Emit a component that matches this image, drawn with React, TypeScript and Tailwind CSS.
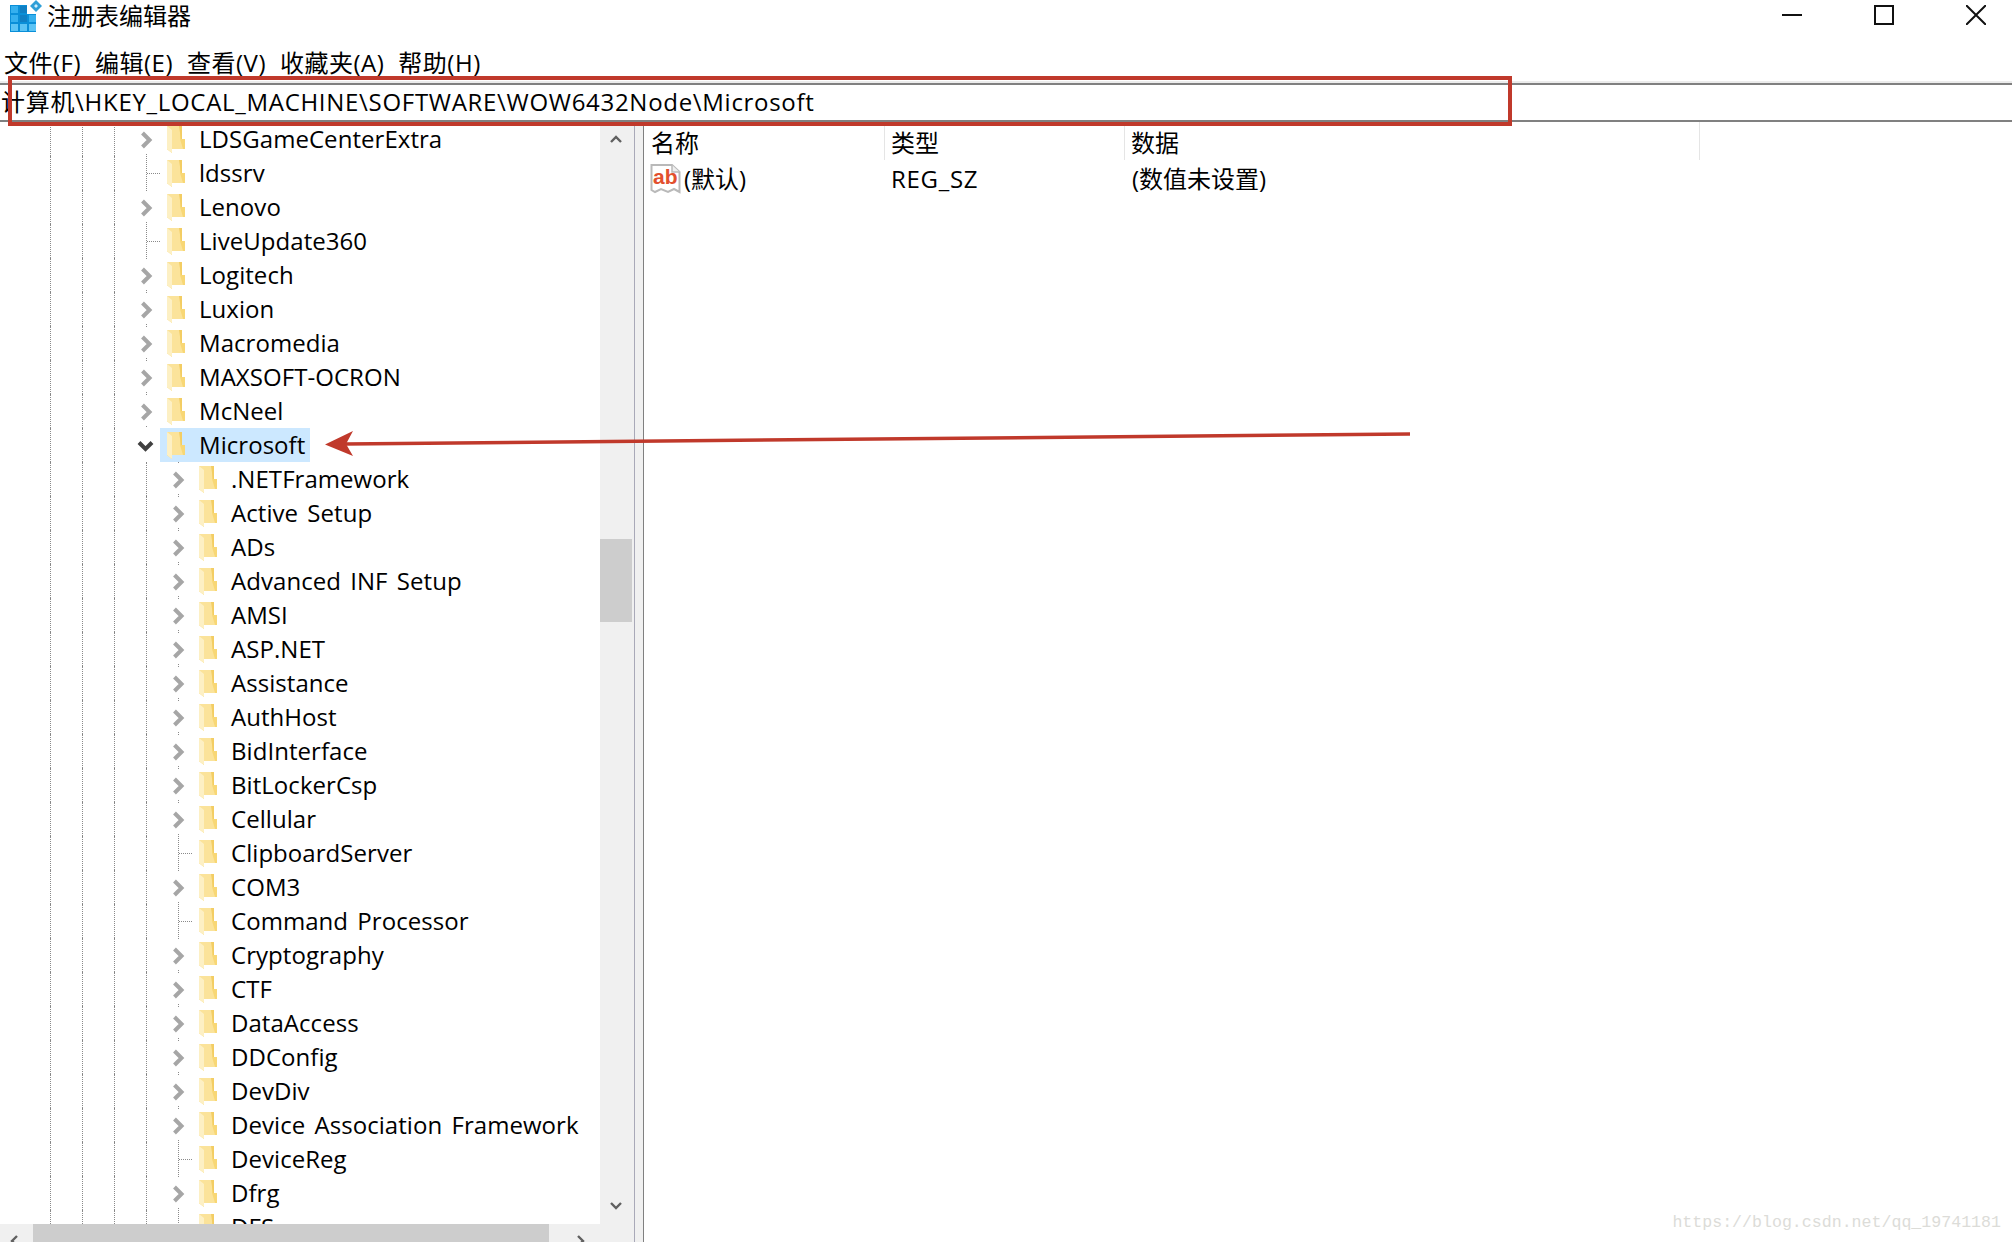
const fontFamily = '"Open Sans", "Noto Sans CJK SC", sans-serif'

type Kind = 'branch' | 'leaf' | 'open'
type Node = { name: string; kind?: Kind }

const topLevel: Node[] = [
  { name: 'LDSGameCenterExtra' },
  { name: 'ldssrv', kind: 'leaf' },
  { name: 'Lenovo' },
  { name: 'LiveUpdate360', kind: 'leaf' },
  { name: 'Logitech' },
  { name: 'Luxion' },
  { name: 'Macromedia' },
  { name: 'MAXSOFT-OCRON' },
  { name: 'McNeel' },
  { name: 'Microsoft', kind: 'open' },
]

const children: Node[] = [
  { name: '.NETFramework' },
  { name: 'Active Setup' },
  { name: 'ADs' },
  { name: 'Advanced INF Setup' },
  { name: 'AMSI' },
  { name: 'ASP.NET' },
  { name: 'Assistance' },
  { name: 'AuthHost' },
  { name: 'BidInterface' },
  { name: 'BitLockerCsp' },
  { name: 'Cellular' },
  { name: 'ClipboardServer', kind: 'leaf' },
  { name: 'COM3' },
  { name: 'Command Processor', kind: 'leaf' },
  { name: 'Cryptography' },
  { name: 'CTF' },
  { name: 'DataAccess' },
  { name: 'DDConfig' },
  { name: 'DevDiv' },
  { name: 'Device Association Framework' },
  { name: 'DeviceReg', kind: 'leaf' },
  { name: 'Dfrg' },
  { name: 'DFS', kind: 'leaf' },
]

function FolderIcon() {
  return (
    <svg width="18" height="27" viewBox="0 0 18 27" className="shrink-0">
      <path d="M0 0H15V13H18V23H5V27L0 23Z" fill="#f8d775" />
      <path d="M0 0H13V13L16 23H5V27L0 23Z" fill="#fbe39a" />
      <path d="M0 0L5 4V27L0 23Z" fill="#fdf0c4" />
      <path d="M5 23H18V13H14L12 0H15V13H18V23Z" fill="#f3cd63" />
    </svg>
  )
}

function Guide() {
  return (
    <div className="flex h-full w-[32px] shrink-0 justify-center">
      <div className="h-full w-0 border-l border-dotted border-[#8a8a8a]" />
    </div>
  )
}

function Connector({ kind }: { kind: Kind }) {
  return (
    <svg width="32" height="34" viewBox="0 0 32 34" className="shrink-0">
      {kind === 'leaf' && (
        <g stroke="#8a8a8a" strokeDasharray="1 1" fill="none">
          <path d="M16.5 0V34" />
          <path d="M17 17.5H30" />
        </g>
      )}
      {kind === 'branch' && (
        <>
          <path d="M16.5 0V2M16.5 32V34" stroke="#8a8a8a" strokeDasharray="1 1" />
          <path d="M12.5 11L19.5 18L12.5 25" fill="none" stroke="#a6a6a6" strokeWidth="4" />
        </>
      )}
      {kind === 'open' && (
        <path d="M9 14.5L15.5 21L22 14.5" fill="none" stroke="#404040" strokeWidth="4" />
      )}
    </svg>
  )
}

function TreeRow({ node, level }: { node: Node; level: number }) {
  const kind = node.kind ?? 'branch'
  const selected = kind === 'open'
  return (
    <div className="flex h-[34px] items-center pl-[34px] tracking-[0.05px] [word-spacing:3px]">
      <Guide />
      <Guide />
      <Guide />
      {level === 2 && <Guide />}
      <Connector kind={kind} />
      {selected ? (
        <div className="-ml-[2px] flex h-[34px] items-center bg-[#cce8ff] pr-[5px] pl-[7px]">
          <FolderIcon />
          <span className="ml-[14px]">{node.name}</span>
        </div>
      ) : (
        <>
          <div className="ml-[5px]">
            <FolderIcon />
          </div>
          <span className="ml-[14px] whitespace-nowrap">{node.name}</span>
        </>
      )}
    </div>
  )
}

function AbIcon() {
  return (
    <svg width="31" height="32" viewBox="0 0 31 32" className="shrink-0">
      <path
        d="M1.5 2H22L29.5 9V29L24 26L18 29L11 26L5 29L1.5 27Z"
        fill="#fff"
        stroke="#b9b9b9"
        strokeWidth="2"
      />
      <path d="M22 2V9H29.5" fill="#efefef" stroke="#b9b9b9" strokeWidth="1.5" />
      <text x="3" y="21" fontSize="21" fontWeight="700" fill="#e2502e" fontFamily="Liberation Sans, sans-serif">
        ab
      </text>
    </svg>
  )
}

function RegeditIcon() {
  const cells = [
    [0, 0], [9, 0], [0, 9], [9, 9], [18, 9], [0, 18], [9, 18], [18, 18],
  ]
  return (
    <svg width="32" height="32" viewBox="0 0 32 32" className="shrink-0">
      <rect x="0" y="5" width="17" height="27" fill="#0a8fd8" />
      <rect x="17" y="14" width="9" height="18" fill="#0a8fd8" />
      {cells.map(([x, y], i) => (
        <rect
          key={i}
          x={x + 1}
          y={y + 6}
          width="7"
          height="7"
          fill={y === 18 ? '#5cc4f5' : i % 2 ? '#0f7fc4' : '#35b0ee'}
        />
      ))}
      <path d="M26 0L32 6L26 12L20 6Z" fill="#2f9fd8" />
      <path d="M26 4L28 6L26 8L24 6Z" fill="#cfeefc" />
    </svg>
  )
}

export default function App() {
  return (
    <div
      className="relative flex h-[1242px] w-[2012px] flex-col overflow-hidden bg-white text-[24px] text-black"
      style={{ fontFamily }}
    >
      <div className="flex h-[34px] shrink-0 items-start pr-[26px] pl-[10px]">
        <RegeditIcon />
        <span className="ml-[5px] leading-[32px]">注册表编辑器</span>
        <div className="ml-auto flex gap-[72px] pt-[5px]">
          <svg width="20" height="20" viewBox="0 0 20 20">
            <path d="M0 10H20" stroke="#111" strokeWidth="2" />
          </svg>
          <svg width="20" height="20" viewBox="0 0 20 20">
            <rect x="1" y="1" width="18" height="18" fill="none" stroke="#111" strokeWidth="2" />
          </svg>
          <svg width="20" height="20" viewBox="0 0 20 20">
            <path d="M0 0L20 20M20 0L0 20" stroke="#111" strokeWidth="2" />
          </svg>
        </div>
      </div>

      <div className="flex h-[49px] shrink-0 items-end gap-[14px] border-b-2 border-[#ececec] pl-[4px] leading-[36px] tracking-[0.5px]">
        <span>文件(F)</span>
        <span>编辑(E)</span>
        <span>查看(V)</span>
        <span>收藏夹(A)</span>
        <span>帮助(H)</span>
      </div>

      <div className="flex h-[39px] shrink-0 items-center border-y-2 border-[#808080] pb-[2px] pl-[1px] tracking-[0.7px] whitespace-nowrap">
        计算机\HKEY_LOCAL_MACHINE\SOFTWARE\WOW6432Node\Microsoft
      </div>

      <div className="flex min-h-0 flex-1">
        <div className="flex w-[634px] shrink-0 flex-col">
          <div className="flex min-h-0 flex-1">
            <div className="h-full w-[600px] shrink-0 overflow-hidden">
              {topLevel.map((n) => (
                <TreeRow key={n.name} node={n} level={1} />
              ))}
              {children.map((n) => (
                <TreeRow key={n.name} node={n} level={2} />
              ))}
            </div>
            <div className="flex w-[34px] shrink-0 flex-col bg-[#f0f0f0]">
              <div className="flex h-[34px] items-center justify-center pr-[2px]">
                <svg width="12" height="8" viewBox="0 0 12 8">
                  <path d="M1 7L6 2L11 7" fill="none" stroke="#606060" strokeWidth="2.4" />
                </svg>
              </div>
              <div className="h-[383px]" />
              <div className="h-[83px] w-[32px] bg-[#cdcdcd]" />
              <div className="flex-1" />
              <div className="flex h-[36px] items-center justify-center pr-[2px]">
                <svg width="12" height="8" viewBox="0 0 12 8">
                  <path d="M1 1L6 6L11 1" fill="none" stroke="#606060" strokeWidth="2.4" />
                </svg>
              </div>
            </div>
          </div>
          <div className="flex h-[18px] shrink-0 bg-[#f0f0f0]">
            <div className="w-[33px] pt-[11px] pl-[10px]">
              <svg width="9" height="12" viewBox="0 0 9 12">
                <path d="M7 1L2 6L7 11" fill="none" stroke="#606060" strokeWidth="2.4" />
              </svg>
            </div>
            <div className="w-[516px] bg-[#cdcdcd]" />
            <div className="pt-[11px] pl-[27px]">
              <svg width="9" height="12" viewBox="0 0 9 12">
                <path d="M2 1L7 6L2 11" fill="none" stroke="#606060" strokeWidth="2.4" />
              </svg>
            </div>
          </div>
        </div>

        <div className="h-full w-[10px] shrink-0 border-x border-r-[#808080] border-l-[#a9a9b8] bg-[#f0f0f0]" />

        <div className="min-w-0 flex-1">
          <div className="flex h-[38px]">
            <div className="w-[241px] border-r border-[#e5e5e5] pl-[7px] leading-[42px]">名称</div>
            <div className="w-[240px] border-r border-[#e5e5e5] pl-[6px] leading-[42px]">类型</div>
            <div className="w-[575px] border-r border-[#e5e5e5] pl-[6px] leading-[42px]">数据</div>
          </div>
          <div className="flex h-[38px] items-center">
            <div className="flex w-[241px] items-center pl-[6px]">
              <AbIcon />
              <span className="ml-[3px]">(默认)</span>
            </div>
            <div className="w-[240px] pl-[6px] tracking-[0.7px]">REG_SZ</div>
            <div className="pl-[7px]">(数值未设置)</div>
          </div>
        </div>
      </div>

      {/* annotations drawn on top of the screenshot */}
      <div className="absolute top-[76px] left-[8px] h-[50px] w-[1504px] border-4 border-[#c0392b]" />
      <svg
        className="absolute top-[425px] left-[320px]"
        width="1095"
        height="34"
        viewBox="0 0 1095 34"
      >
        <path d="M25 19L1090 9" stroke="#c0392b" strokeWidth="3.5" />
        <path d="M5 19.5L33 6L26 19L33 31Z" fill="#c0392b" />
      </svg>
      <div className="absolute top-[1211px] right-[11px] font-['Liberation_Mono',monospace] text-[16.6px] text-[#dcdcd8]">
        https://blog.csdn.net/qq_19741181
      </div>
    </div>
  )
}
